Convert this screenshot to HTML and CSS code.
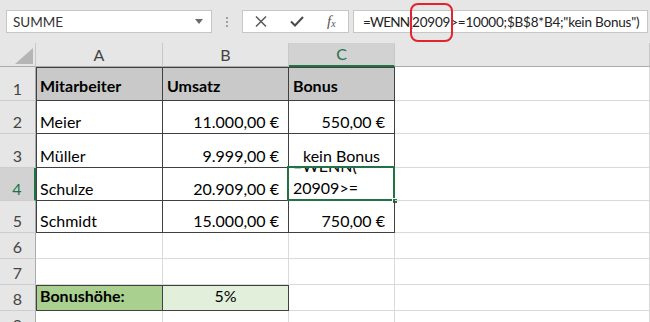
FILE: index.html
```html
<!DOCTYPE html>
<html>
<head>
<meta charset="utf-8">
<link rel="stylesheet" href="styles.css">
</head>
<body>
<div class="app">
  <div class="toolbar">
    <div class="namebox"><span>SUMME</span><svg class="dd" width="8" height="5" viewBox="0 0 8 5"><path d="M0 0H8L4 5Z" fill="#6b6b6b"/></svg></div>
    <div class="grip"><i></i><i></i><i></i></div>
    <div class="btns">
      <svg width="12" height="11" viewBox="0 0 12 11"><path d="M1 0.5L11 10.5M11 0.5L1 10.5" stroke="#5a5a5a" stroke-width="1.5" fill="none"/></svg>
      <svg width="14" height="11" viewBox="0 0 14 11"><path d="M1 5.5L5 9.5L13 1" stroke="#4a4a4a" stroke-width="2" fill="none"/></svg>
      <span class="fx"><i>f</i><sub>x</sub></span>
    </div>
    <div class="formula"><span><span class="fn">=WENN(</span>20909&gt;=10000;$B$8*B4;"kein Bonus")</span></div>
    <div class="mark"></div>
  </div>
  <div class="sheet">
    <div class="c corner"><svg width="18" height="16" viewBox="0 0 18 16"><path d="M0 16L18 0V16Z" fill="#b5b5b5"/></svg></div>
    <div class="c ch">A</div>
    <div class="c ch">B</div>
    <div class="c ch sel">C</div>
    <div class="c ch"></div>

    <div class="c rh">1</div>
    <div class="c t l top hd b">Mitarbeiter</div>
    <div class="c t top hd b">Umsatz</div>
    <div class="c t top hd b">Bonus</div>
    <div class="c"></div>

    <div class="c rh">2</div>
    <div class="c t l">Meier</div>
    <div class="c t r">11.000,00 €</div>
    <div class="c t r">550,00 €</div>
    <div class="c"></div>

    <div class="c rh">3</div>
    <div class="c t l">Müller</div>
    <div class="c t r">9.999,00 €</div>
    <div class="c t ctr">kein Bonus</div>
    <div class="c"></div>

    <div class="c rh sel">4</div>
    <div class="c t l">Schulze</div>
    <div class="c t r">20.909,00 €</div>
    <div class="c t active">
      <div class="clip"><div>=WENN(</div><div>20909&gt;=</div></div>
      <div class="selbox"></div>
      <div class="handle"></div>
    </div>
    <div class="c"></div>

    <div class="c rh">5</div>
    <div class="c t l">Schmidt</div>
    <div class="c t r">15.000,00 €</div>
    <div class="c t r">750,00 €</div>
    <div class="c"></div>

    <div class="c rh">6</div>
    <div class="c"></div><div class="c"></div><div class="c"></div><div class="c"></div>

    <div class="c rh">7</div>
    <div class="c"></div><div class="c"></div><div class="c"></div><div class="c"></div>

    <div class="c rh">8</div>
    <div class="c t l top hd b green">Bonushöhe:</div>
    <div class="c t top hd ctr lightgreen">5%</div>
    <div class="c"></div>
    <div class="c"></div>

    <div class="c rh">9</div>
    <div class="c"></div><div class="c"></div><div class="c"></div><div class="c"></div>
  </div>
</div>
</body>
</html>
```
FILE: styles.css
```css
* { box-sizing: border-box; }
body {
  margin: 0;
  width: 650px;
  height: 322px;
  overflow: hidden;
  background: #fff;
  font-family: Lato, "Open Sans", sans-serif;
}
.toolbar {
  position: relative;
  display: flex;
  align-items: flex-start;
  height: 43px;
  padding: 10px 2px 0 6px;
  background: #e6e6e6;
}
.namebox {
  flex: 0 0 206px;
  height: 23px;
  background: #fff;
  border: 1px solid #c6c6c6;
  display: flex;
  align-items: center;
  justify-content: space-between;
  padding: 0 8px 0 6px;
  font-size: 13.5px;
  color: #333;
}
.grip {
  flex: 0 0 30px;
  height: 23px;
  display: flex;
  flex-direction: column;
  align-items: center;
  justify-content: center;
  gap: 2px;
}
.grip i {
  display: block;
  width: 2px;
  height: 2px;
  background: #a0a0a0;
}
.btns {
  flex: 0 0 107px;
  height: 23px;
  margin-right: 4px;
  background: #fff;
  border: 1px solid #c6c6c6;
  display: flex;
  align-items: center;
  gap: 23px;
  padding-left: 12px;
}
.fx {
  font-family: "Liberation Serif", serif;
  font-size: 15px;
  color: #555;
  line-height: 1;
}
.fx sub { font-size: 10px; font-style: italic; vertical-align: -1px; }
.formula {
  flex: 1 1 auto;
  min-width: 0;
  overflow: hidden;
  height: 23px;
  background: #fff;
  border: 1px solid #c6c6c6;
  display: flex;
  align-items: center;
  padding-left: 9px;
  font-size: 13.5px;
  letter-spacing: -0.2px;
  color: #222;
  white-space: nowrap;
}
.fn { letter-spacing: -0.8px; }
.mark {
  position: absolute;
  left: 410px;
  top: 3px;
  width: 43px;
  height: 39px;
  border: 2px solid #e3242b;
  border-radius: 8px;
}
.sheet {
  display: grid;
  grid-template-columns: 36px 127px 126px 106px 1fr;
  grid-template-rows: 24px 34px 33px 34px 33px 32px 26px 26px 26px 26px;
}
.c {
  position: relative;
  display: flex;
  align-items: flex-end;
  padding: 0 4px 1px;
  border-right: 1px solid #dadada;
  border-bottom: 1px solid #dadada;
  font-size: 16px;
  line-height: 20px;
  color: #000;
  white-space: nowrap;
}
.corner {
  background: #e6e6e6;
  border-right: 1px solid #c8c8c8;
  border-bottom: 1px solid #ababab;
  padding: 0 2px 2px 0;
  justify-content: flex-end;
}
.corner svg { display: block; }
.ch {
  background: #e6e6e6;
  border-right: 1px solid #c8c8c8;
  border-bottom: 1px solid #ababab;
  justify-content: center;
  align-items: center;
  padding: 0;
  color: #444;
}
.ch.sel {
  background: #d2d2d2;
  color: #217346;
  border-bottom: 2px solid #217346;
}
.rh {
  background: #e6e6e6;
  border-right: 1px solid #ababab;
  border-bottom: 1px solid #cdcdcd;
  justify-content: center;
  padding: 0 0 1px;
  color: #444;
}
.rh.sel {
  background: #d2d2d2;
  color: #217346;
  border-right: 2px solid #217346;
}
.t { border-right-color: #404040; border-bottom-color: #404040; }
.t.l { box-shadow: inset 1px 0 0 #404040; }
.t.top { box-shadow: inset 0 1px 0 #404040; }
.t.l.top { box-shadow: inset 1px 1px 0 #404040; }
.hd { background: #c9c9c9; padding-bottom: 4px; }
.b { font-weight: 700; }
.r { justify-content: flex-end; padding-right: 9px; }
.ctr { justify-content: center; }
.green { background: #a9d08e; }
.lightgreen { background: #e2efda; }
.active { display: block; padding: 0; }
.clip {
  height: 100%;
  overflow: hidden;
  display: flex;
  flex-direction: column;
  justify-content: flex-end;
  padding: 0 4px 1px;
  line-height: 22px;
}
.selbox {
  position: absolute;
  left: -2px;
  top: -2px;
  right: -1px;
  bottom: -1px;
  border: 2px solid #217346;
}
.handle {
  position: absolute;
  right: -4px;
  bottom: -4px;
  width: 6px;
  height: 6px;
  background: #217346;
  border: 1px solid #fff;
}
```
